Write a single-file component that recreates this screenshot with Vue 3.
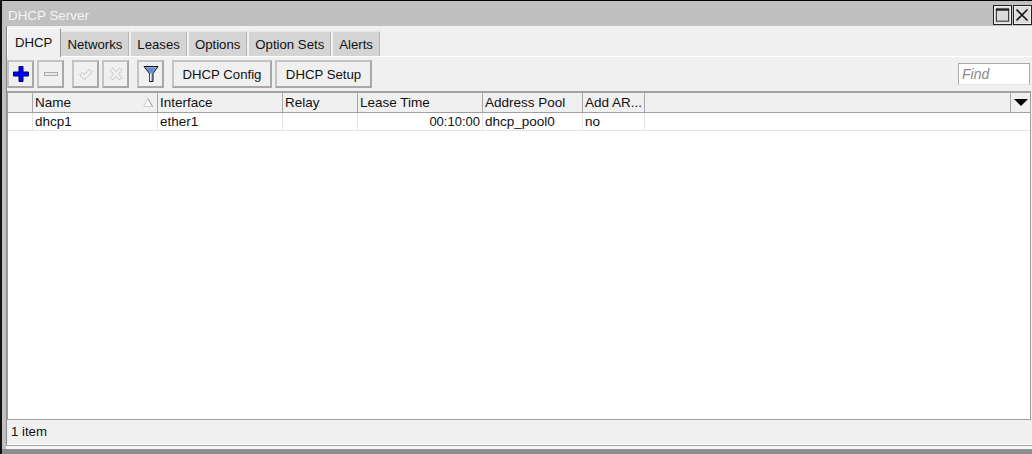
<template>
  <div class="window">
    <div class="titlebar">
      <span class="title">DHCP Server</span>
      <div class="win-btns">
        <button class="win-btn" aria-label="Maximize">
          <svg width="18" height="18" viewBox="0 0 18 18"><rect x="2.500" y="2.500" width="13" height="13" fill="none" stroke="#222" stroke-width="1"/><path d="M2 3.500h14" stroke="#222" stroke-width="2"/></svg>
        </button>
        <button class="win-btn" aria-label="Close">
          <svg width="17" height="18" viewBox="0 0 17 18"><path d="M2.500 3.500l11 11M13.500 3.500l-11 11" fill="none" stroke="#111" stroke-width="1.600"/></svg>
        </button>
      </div>
    </div>

    <div class="body">
      <div class="tabs">
        <div v-for="(tab, i) in tabs" :key="tab" class="tab" :class="{ active: i === 0 }">{{ tab }}</div>
      </div>

      <div class="toolbar">
        <button class="tool-btn" aria-label="Add">
          <svg width="16" height="16" viewBox="0 0 16 16"><path d="M6 .5h4v5.500h5.500v4H10v5.500H6V10H.5V6H6z" fill="#0000ff" stroke="#000050" stroke-width="1"/></svg>
        </button>
        <button class="tool-btn" aria-label="Remove">
          <svg width="16" height="16" viewBox="0 0 16 16"><rect x="1.500" y="6.500" width="13" height="3" fill="#e8e8e8" stroke="#aaa"/></svg>
        </button>
        <button class="tool-btn group" aria-label="Enable">
          <svg width="16" height="16" viewBox="0 0 16 16"><path d="M1.500 9l2.500-2.500 2 2 6-5L14.500 6l-8 7.500z" fill="#f0f0f0" stroke="#b0b0b0" stroke-dasharray="1.500 .7"/></svg>
        </button>
        <button class="tool-btn" aria-label="Disable">
          <svg width="16" height="16" viewBox="0 0 16 16"><path d="M4.500 2l3.500 3.500L11.500 2l2.500 2.500L10.500 8l3.500 3.500-2.500 2.500L8 10.500 4.500 14 2 11.500 5.500 8 2 4.500z" fill="#f0f0f0" stroke="#b0b0b0" stroke-dasharray="1.500 .7"/></svg>
        </button>
        <button class="tool-btn group" aria-label="Filter">
          <svg width="16" height="18" viewBox="0 0 16 18"><path d="M1 1.500h14L10 8.500v8H6.500v-8z" fill="#8fb0dc" stroke="#111" stroke-width="1"/><path d="M3.500 3h9L9.500 7.500h-3z" fill="#5f8fcf"/><path d="M7.500 9v7" stroke="#eef3f9" stroke-width="1.500"/></svg>
        </button>
        <button class="tool-btn text group config">DHCP Config</button>
        <button class="tool-btn text setup">DHCP Setup</button>
        <input class="find" placeholder="Find" />
      </div>

      <div class="table">
        <div class="row head">
          <div v-for="col in columns" :key="col.key" class="cell" :style="{ width: col.width + 'px' }">
            <span>{{ col.label }}</span>
            <svg v-if="col.key === 'name'" class="sort" width="10" height="9" viewBox="0 0 10 9">
              <path d="M5 .5L9.500 8.500H.5z" fill="#f8f8f8" stroke="#d0d0d0"/>
              <path d="M5 .5L9.500 8.500" fill="none" stroke="#a0a0a0"/>
            </svg>
          </div>
          <div class="cell fill"></div>
          <div class="cell menu">
            <svg width="14" height="7" viewBox="0 0 14 7"><path d="M0 0h14L7 7z" fill="#000"/></svg>
          </div>
        </div>
        <div class="row item" v-for="row in rows" :key="row.name">
          <div
            v-for="col in columns"
            :key="col.key"
            class="cell"
            :class="{ right: col.key === 'lease' }"
            :style="{ width: col.width + 'px' }"
          >{{ row[col.key] }}</div>
        </div>
      </div>

      <div class="status">1 item</div>
      <div class="edge"></div>
    </div>
    <div class="bottom"></div>
  </div>
</template>

<script setup>
const tabs = ['DHCP', 'Networks', 'Leases', 'Options', 'Option Sets', 'Alerts']

const columns = [
  { key: 'mark', label: '', width: 25 },
  { key: 'name', label: 'Name', width: 125 },
  { key: 'iface', label: 'Interface', width: 125 },
  { key: 'relay', label: 'Relay', width: 75 },
  { key: 'lease', label: 'Lease Time', width: 125 },
  { key: 'pool', label: 'Address Pool', width: 100 },
  { key: 'arp', label: 'Add AR...', width: 62 },
]

const rows = [
  { mark: '', name: 'dhcp1', iface: 'ether1', relay: '', lease: '00:10:00', pool: 'dhcp_pool0', arp: 'no' },
]
</script>

<style>
html, body {
  margin: 0;
  background: #fff;
}
</style>

<style scoped>
.window {
  width: 1032px;
  height: 454px;
  box-sizing: border-box;
  display: flex;
  flex-direction: column;
  background: #c0c0c0;
  border-top: 1px solid #000;
  border-left: 2px solid #111;
  font-family: "Liberation Sans", Arial, sans-serif;
  font-size: 13.2px;
  color: #111;
  overflow: hidden;
}

.titlebar {
  height: 25px;
  flex: none;
  display: flex;
  align-items: center;
  justify-content: space-between;
  padding-left: 6px;
}

.title {
  margin-top: 3px;
  font-size: 13.4px;
  color: #f4f4f4;
}

.win-btns {
  display: flex;
  gap: 1px;
  margin-top: 3px;
}

.win-btn {
  width: 19px;
  height: 20px;
  padding: 0;
  display: flex;
  align-items: center;
  justify-content: center;
  background: #dcdcdc;
  border: 1px solid #222;
  outline: 1px solid #eee;
  outline-offset: -2px;
}

.body {
  flex: none;
  height: 423px;
  margin-left: 4px;
  display: flex;
  flex-direction: column;
  background: #f0f0f0;
  border-left: 1px solid #8a8a8a;
  box-sizing: border-box;
}

.tabs {
  height: 30px;
  flex: none;
  display: flex;
  align-items: flex-end;
}

.tab {
  height: 25px;
  box-sizing: border-box;
  padding: 5px 6px 0;
  margin-right: 2px;
  background: #d4d4d4;
  border-right: 1px solid #b4b4b4;
  border-top: 1px solid #e8e8e8;
  white-space: nowrap;
}

.tab.active {
  position: relative;
  height: 29px;
  margin-right: 0;
  margin-bottom: -1px;
  padding: 6px 8px 0 7px;
  background: #f0f0f0;
  border-top: 1px solid #fff;
  border-left: 1px solid #fff;
  border-right: 1px solid #999;
}

.toolbar {
  height: 35px;
  flex: none;
  box-sizing: border-box;
  display: flex;
  align-items: center;
  gap: 3px;
  padding: 0 2px 0 0;
  border-top: 1px solid #fff;
}

.tool-btn {
  width: 27px;
  height: 28px;
  padding: 0;
  flex: none;
  display: flex;
  align-items: center;
  justify-content: center;
  box-sizing: border-box;
  background: #f0f0f0;
  border: 2px solid #b4b4b4;
  border-color: #c4c4c4 #a8a8a8 #a8a8a8 #c4c4c4;
  font: inherit;
  color: inherit;
}

.tool-btn.group {
  margin-left: 5px;
}

.tool-btn.config {
  width: 100px;
}

.tool-btn.setup {
  width: 97px;
}

.find {
  width: 72px;
  height: 22px;
  box-sizing: border-box;
  margin-left: auto;
  padding: 0 3px;
  background: #fff;
  border: 1px solid #aaa;
  border-bottom-color: #e8e8e8;
  font: italic 14px "Liberation Sans", Arial, sans-serif;
  color: #111;
}

.find::placeholder {
  color: #8a8a8a;
  opacity: 1;
}

.table {
  flex: 1;
  min-height: 0;
  margin-right: 1px;
  font-size: 13.5px;
  background: #fff;
  border-top: 2px solid #a0a0a0;
  border-bottom: 1px solid #a0a0a0;
  border-left: 1px solid #a0a0a0;
  border-right: 1px solid #a0a0a0;
}

.row {
  display: flex;
}

.cell {
  box-sizing: border-box;
  flex: none;
  display: flex;
  align-items: center;
  padding: 0 2px;
  border-right: 1px solid #e4e4e4;
  white-space: nowrap;
  overflow: hidden;
}

.cell.right {
  justify-content: flex-end;
  font-size: 13px;
}

.head {
  height: 20px;
  background: #f0f0f0;
  border-bottom: 1px solid #a0a0a0;
  box-sizing: border-box;
}

.head .cell {
  border-right-color: #a8a8a8;
}

.sort {
  margin-left: auto;
  margin-right: 2px;
}

.cell.fill {
  flex: 1;
}

.cell.menu {
  width: 19px;
  justify-content: center;
  border-right: none;
}

.item {
  height: 18px;
  box-sizing: border-box;
  border-bottom: 1px solid #e4e4e4;
}

.status {
  height: 25px;
  flex: none;
  box-sizing: border-box;
  padding: 0 4px 2px;
  display: flex;
  align-items: center;
  border-bottom: 1px solid #fff;
}

.edge {
  height: 4px;
  flex: none;
  box-sizing: border-box;
  margin-left: -1px;
  background: #f8f8f8;
  border-top: 1px solid #a0a0a0;
}

.bottom {
  flex: 1;
  margin-left: -2px;
  background: #8e8e8e;
}
</style>
